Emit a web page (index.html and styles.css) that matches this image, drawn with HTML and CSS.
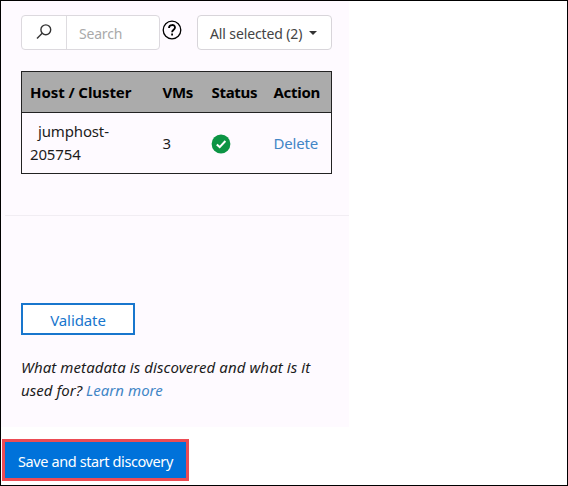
FILE: index.html
```html
<!DOCTYPE html>
<html lang="en">
<head>
<meta charset="utf-8">
<title>Discovery</title>
<link rel="stylesheet" href="styles.css">
</head>
<body>
<main class="frame">
  <section class="panel">
    <div class="toolbar">
      <div class="search">
        <span class="search-icon"><svg width="18" height="18" viewBox="0 0 18 18"><circle cx="10.8" cy="6.8" r="4.9"/><path d="M7.2 10.3L2 15.4"/></svg></span>
        <span class="search-text">Search</span>
      </div>
      <svg class="help" width="20" height="20" viewBox="0 0 20 20"><circle cx="10" cy="10" r="8.8"/><path class="mark" d="M7 8.1C7 4.1 13 4.1 13 7.5C13 9.8 10.1 9.6 10.1 12.2"/><path class="mark" d="M10.1 13.6V15.4"/></svg>
      <div class="select"><span>All selected (2)</span><i class="caret"></i></div>
    </div>
    <table class="hosts">
      <thead><tr><th class="c-host">Host / Cluster</th><th class="c-vms">VMs</th><th class="c-status">Status</th><th class="c-action">Action</th></tr></thead>
      <tbody><tr>
        <td><span class="indent">jumphost-</span><br><span class="digits">205754</span></td>
        <td>3</td>
        <td><svg class="ok" width="20" height="20" viewBox="0 0 20 20"><circle cx="10" cy="10" r="9.4"/><path d="M5.8 10.4L8.7 13.1L14.4 7"/></svg></td>
        <td><a class="delete">Delete</a></td>
      </tr></tbody>
    </table>
    <hr class="divider">
    <button class="validate">Validate</button>
    <p class="note"><span class="line1">What metadata is discovered and what is it</span><br><span class="line2">used for? <a>Learn more</a></span></p>
  </section>
  <button class="save">Save and start discovery</button>
</main>
</body>
</html>
```
FILE: styles.css
```css
* { box-sizing: border-box; }
body { margin: 0; font-family: "Noto Sans", "Open Sans", sans-serif; font-size: 15px; color: #1c1c1c; }
.frame { width: 568px; height: 486px; border: 1px solid #000; background: #fff; }
.panel { width: 348px; height: 426px; padding: 14px 17px 0 20px; background: #fefaff; }
.toolbar { display: flex; height: 35px; }
.search { display: flex; width: 139px; height: 35px; border: 1px solid #dcd9de; border-radius: 4px; background: #fff; }
.search-icon { width: 45px; padding: 7px 0 0 13px; border-right: 1px solid #dedce0; }
.search-icon svg { display: block; fill: none; stroke: #333; stroke-width: 1.4; }
.search-text { padding-left: 12px; line-height: 36px; font-size: 14px; letter-spacing: -.2px; color: #aaa; }
.help { display: block; margin: 5px 0 0 2px; fill: none; stroke: #000; stroke-width: 1.3; }
.help .mark { stroke-width: 1.8; }
.select { display: flex; align-items: center; width: 135px; height: 35px; margin-left: 15px; padding: 1px 0 0 12px; border: 1px solid #d8d5da; border-radius: 4px; background: #fff; color: #444; font-size: 14px; letter-spacing: -.12px; white-space: nowrap; }
.caret { margin-left: 7px; border: 4px solid transparent; border-top-color: #333; border-bottom: 0; }
.hosts { width: 311px; height: 103px; margin-top: 21px; border: 1px solid #222; border-collapse: collapse; table-layout: fixed; }
.hosts th { height: 41px; padding: 0 0 0 8px; background: #ababab; border-bottom: 1px solid #222; text-align: left; font-size: 15px; font-weight: 700; line-height: 22px; letter-spacing: -.3px; color: #000; white-space: nowrap; }
.hosts td { padding: 0 0 0 8px; line-height: 23px; vertical-align: middle; }
.hosts .c-host { width: 133px; letter-spacing: -.08px; }
.c-vms { width: 49px; }
.c-status { width: 62px; }
.indent { margin-left: 8px; letter-spacing: -.15px; }
.digits { letter-spacing: -.15px; }
.ok { display: block; position: relative; left: -1px; top: 1px; fill: #0c9444; }
.ok path { fill: none; stroke: #fff; stroke-width: 2; }
.delete { letter-spacing: -.2px; color: #4286c6; }
.divider { height: 1px; margin: 41px -17px 0 -16px; border: 0; background: #f1edf3; }
.validate { display: block; width: 114px; height: 32px; margin-top: 87px; padding: 1px 0 0; border: 2px solid #1876cd; background: #fff; color: #1876cd; font: 15px "Noto Sans", sans-serif; letter-spacing: -.1px; }
.note { margin: 21px -10px 0 0; font-style: italic; line-height: 23px; white-space: nowrap; }
.note a { color: #4286c6; }
.line1 { letter-spacing: .08px; }
.line2 { letter-spacing: .03px; }
.save { display: block; width: 187px; height: 42px; margin: 12px 0 0 1px; padding: 1px 0 0; border: 3px solid #ec4c54; background: #0072da; color: #fff; font: 14.5px "Noto Sans", sans-serif; letter-spacing: -.4px; }
```
